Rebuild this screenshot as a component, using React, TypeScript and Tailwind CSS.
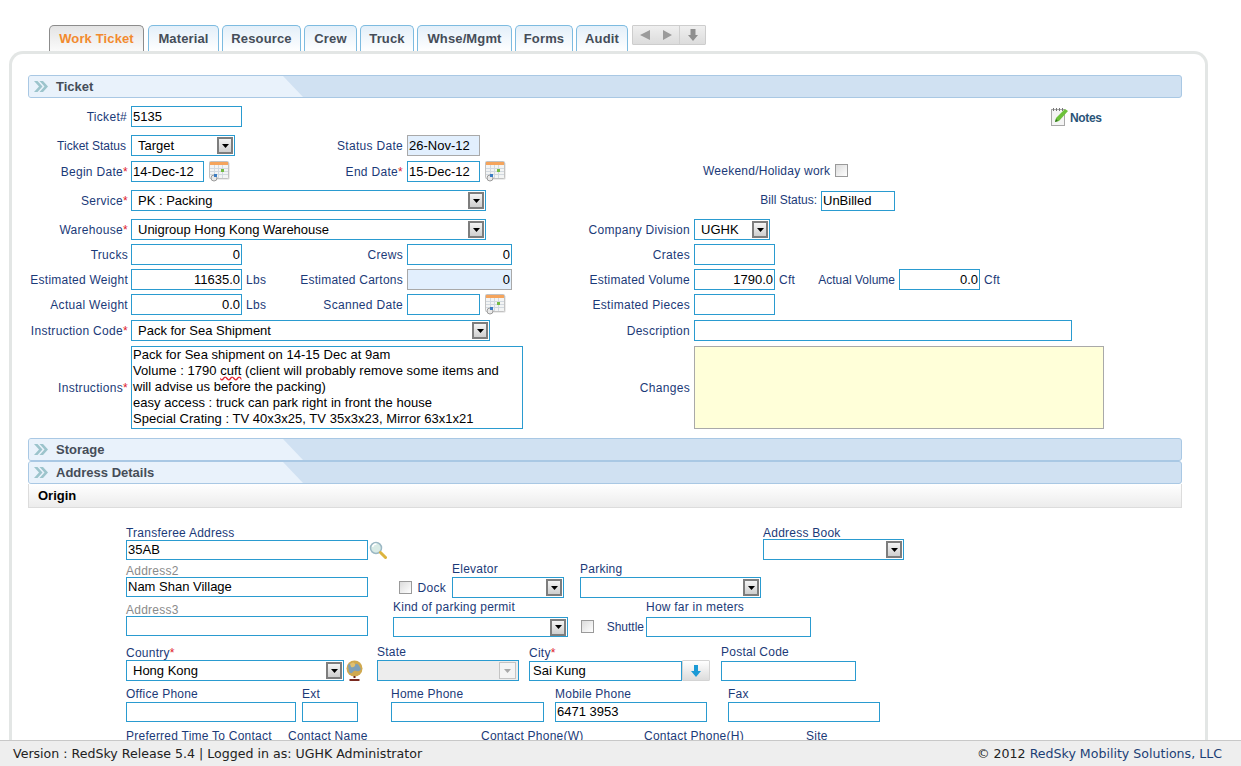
import type { ReactNode } from "react";

const rowGrid = "grid grid-cols-[103px_167px_109px_179px_108px_1fr] items-center";

const tabs = ["Material", "Resource", "Crew", "Truck", "Whse/Mgmt", "Forms", "Audit"];
const tabWidths: Record<string, string> = {
  Material: "w-[71px]",
  Resource: "w-[79px]",
  Crew: "w-[53px]",
  Truck: "w-[54px]",
  "Whse/Mgmt": "w-[95px]",
  Forms: "w-[58px]",
  Audit: "w-[52px]",
};

function Calendar() {
  return (
    <svg width="21" height="21" viewBox="0 0 21 21" className="shrink-0">
      <rect x="1.500" y="1.500" width="19" height="17" rx="1" fill="#d8d8d8" />
      <rect x="0.500" y="0.500" width="19" height="17" rx="1" fill="#f3f4f4" stroke="#c2c2c2" />
      <rect x="1" y="1" width="18" height="3" fill="#f5a45c" />
      <path d="M1 7.500h18M1 10.500h18M1 13.500h18M5.500 4v13M9.500 4v13M13.500 4v13" stroke="#d2d9e0" strokeWidth="1" />
      <rect x="12" y="8" width="3" height="3" fill="#74bb45" />
      <circle cx="5" cy="17" r="3" fill="#e8e8e8" stroke="#9a9a9a" />
      <rect x="5" y="13" width="3" height="3" fill="#3b7cc2" />
    </svg>
  );
}

function Arrow({ disabled }: { disabled?: boolean }) {
  return (
    <span
      className={
        disabled
          ? "flex h-[17px] w-[17px] items-center justify-center border border-[#c4c4c4] bg-[#f4f4f4]"
          : "flex h-[17px] w-[16px] items-center justify-center border-2 border-[#7d7d7d] bg-gradient-to-b from-[#f4f4f4] to-[#cfcfcf]"
      }
    >
      <svg width="7" height="4" viewBox="0 0 7 4">
        <path d="M0 0h7L3.500 4z" fill={disabled ? "#a8a8a8" : "#000"} />
      </svg>
    </span>
  );
}

function Box({
  value,
  right,
  className = "",
  h = "h-[21px]",
  tint,
}: {
  value?: string;
  right?: boolean;
  className?: string;
  h?: string;
  tint?: boolean;
}) {
  return (
    <div
      className={`flex items-center whitespace-nowrap border px-[1px] text-[13px] text-black ${h} ${
        tint ? "border-[#a9a9a9] bg-[#e2effd]" : "border-[#2a9bd0] bg-white"
      } ${right ? "justify-end" : ""} ${className}`}
    >
      {value}
    </div>
  );
}

function Select({
  value,
  className = "",
  h = "h-[21px]",
}: {
  value?: string;
  className?: string;
  h?: string;
}) {
  return (
    <div
      className={`flex items-center justify-between whitespace-nowrap border border-[#2a9bd0] bg-white pl-[6px] pr-[1px] text-[13px] text-black ${h} ${className}`}
    >
      <span className="pt-[1px]">{value}</span>
      <Arrow />
    </div>
  );
}

function Req() {
  return <span className="text-[#e0202c]">*</span>;
}

function Lbl({
  children,
  className = "",
  track = "tracking-[0.025em]",
}: {
  children: ReactNode;
  className?: string;
  track?: string;
}) {
  return (
    <div className={`whitespace-nowrap text-right text-[12px] text-[#1b3a78] ${track} ${className}`}>
      {children}
    </div>
  );
}

function Check({ className = "" }: { className?: string }) {
  return (
    <span
      className={`block h-[13px] w-[13px] shrink-0 border border-[#9a9a9a] bg-gradient-to-br from-[#dcdcdc] to-white ${className}`}
    />
  );
}

function SectionBar({ title, className = "" }: { title: string; className?: string }) {
  return (
    <div
      className={`relative flex h-[23px] items-center overflow-hidden rounded-[3px] border border-[#a9c8e4] bg-[#d0e1f2] ${className}`}
    >
      <span className="absolute inset-y-0 left-0 w-[275px] bg-[#e9f2fb] [clip-path:polygon(0_0,254px_0,274px_100%,0_100%)]" />
      <svg width="14" height="11" viewBox="0 0 14 11" className="relative ml-[5px]">
        <path d="M0 0l5 5.500-5 5.500h3.500l5-5.500-5-5.500zM5.500 0l5 5.500-5 5.500h3.500l5-5.500-5-5.500z" fill="#9cc4cc" />
      </svg>
      <span className="relative ml-[8px] text-[13px] font-bold text-[#454d58]">{title}</span>
    </div>
  );
}

// top-label field of the address block
function Field({
  label,
  className = "",
  labelClass = "",
  labelColor = "text-[#1b3a78]",
  children,
}: {
  label: ReactNode;
  className?: string;
  labelClass?: string;
  labelColor?: string;
  children?: ReactNode;
}) {
  return (
    <div className={`flex shrink-0 flex-col ${className}`}>
      <div className={`h-[14px] whitespace-nowrap text-[12px] leading-[14px] tracking-[0.02em] ${labelColor} ${labelClass}`}>
        {label}
      </div>
      {children}
    </div>
  );
}

export default function App() {
  return (
    <div className="flex h-[766px] w-[1241px] flex-col overflow-hidden bg-white font-['Liberation_Sans',Arial,sans-serif]">
      <div className="min-h-0 flex-1 overflow-hidden">
        <div className="ml-[49px] flex h-[51px] items-end gap-[3px]">
          <div className="mr-[1px] flex h-[26px] w-[95px] items-center justify-center rounded-t-[5px] border border-b-0 border-[#8c8c8c] bg-gradient-to-b from-[#e4e4e4] to-[#fafafa] text-[13px] font-bold tracking-[0.01em] text-[#f28a2e]">
            Work Ticket
          </div>
          {tabs.map((t) => (
            <div
              key={t}
              className={`flex h-[26px] items-center justify-center rounded-t-[5px] border border-b-0 border-[#7dbbe0] bg-gradient-to-b from-[#e3eff9] to-white text-[13px] font-bold tracking-[0.01em] text-[#454d58] ${tabWidths[t]}`}
            >
              {t}
            </div>
          ))}
          <div className="mb-[6px] ml-[1px] flex h-[20px] w-[74px] items-center rounded-[1px] border border-[#cdcdcd] bg-gradient-to-b from-[#efefef] to-[#dcdcdc]">
            <svg width="39" height="10" viewBox="0 0 39 10" className="ml-[7px]">
              <path d="M0 5l10-5v10zM23 0l9 5-9 5z" fill="#9b9b9b" />
            </svg>
            <span className="h-full border-l border-[#cfcfcf]" />
            <svg width="10" height="12" viewBox="0 0 10 12" className="ml-[8px]">
              <path d="M2.500 0h5v6h2.500l-5 6-5-6h2.500z" fill="#8f8f8f" />
            </svg>
          </div>
        </div>

        <div className="ml-[9px] h-[800px] w-[1199px] rounded-t-[14px] border-[3px] border-b-0 border-[#e3e6e5] pl-[16px] pr-[23px] pt-[21px]">
          <SectionBar title="Ticket" />

          <div className={`${rowGrid} mt-[8px] h-[21px]`}>
            <Lbl className="pr-[4px]">Ticket#</Lbl>
            <Box value="5135" className="w-[111px]" />
            <div className="col-start-6 ml-[357px] flex items-center">
              <svg width="19" height="19" viewBox="0 0 19 19">
                <rect x="0.500" y="2.500" width="13" height="16" fill="#f4f4f4" stroke="#a8a8a8" />
                <path d="M2.500 1v3M5.500 1v3M8.500 1v3M11.500 1v3" stroke="#777" />
                <path d="M4 15l1-4 9-9 3 2-9 10z" fill="#6cc13a" />
                <path d="M4 15l1-3 2 2z" fill="#2f6f20" />
              </svg>
              <span className="ml-[0px] mt-[3px] text-[12px] font-bold tracking-[-0.03em] text-[#2a5478]">Notes</span>
            </div>
          </div>

          <div className={`${rowGrid} mt-[8px] h-[21px]`}>
            <Lbl track="tracking-normal" className="pr-[5px]">Ticket Status</Lbl>
            <Select value="Target" className="w-[104px]" />
            <Lbl className="pr-[4px]">Status Date</Lbl>
            <Box value="26-Nov-12" tint className="w-[73px]" />
          </div>

          <div className={`${rowGrid} mt-[5px] h-[21px]`}>
            <Lbl className="pr-[3px]">
              Begin Date<Req />
            </Lbl>
            <div className="flex items-center gap-[5px]">
              <Box value="14-Dec-12" className="w-[73px]" />
              <Calendar />
            </div>
            <Lbl className="pr-[4px]">
              End Date<Req />
            </Lbl>
            <div className="flex items-center gap-[5px]">
              <Box value="15-Dec-12" className="w-[73px]" />
              <Calendar />
            </div>
            <div className="col-start-6 ml-[9px] flex items-center gap-[6px]">
              <Lbl track="tracking-[0.02em]" className="mb-[2px] w-[126px]">Weekend/Holiday work</Lbl>
              <Check className="mb-[2px]" />
            </div>
          </div>

          <div className={`${rowGrid} mt-[8px] h-[21px]`}>
            <Lbl className="pr-[3px]">
              Service<Req />
            </Lbl>
            <Select value="PK : Packing" className="col-span-3 w-[355px]" />
            <div className="col-start-6 flex items-center">
              <Lbl track="tracking-normal" className="mb-[1px] w-[123px]">Bill Status:</Lbl>
              <Box value="UnBilled" h="h-[20px]" className="ml-[4px] w-[74px]" />
            </div>
          </div>

          <div className={`${rowGrid} mt-[8px] h-[21px]`}>
            <Lbl className="pr-[3px]">
              Warehouse<Req />
            </Lbl>
            <Select value="Unigroup Hong Kong Warehouse" className="col-span-3 w-[355px]" />
            <Lbl className="col-start-5 pr-[4px]">Company Division</Lbl>
            <Select value="UGHK" className="w-[76px]" />
          </div>

          <div className={`${rowGrid} mt-[4px] h-[21px]`}>
            <Lbl className="pr-[3px]">Trucks</Lbl>
            <Box value="0" right className="w-[111px]" />
            <Lbl className="pr-[4px]">Crews</Lbl>
            <Box value="0" right className="w-[105px]" />
            <Lbl className="pr-[4px]">Crates</Lbl>
            <Box className="w-[81px]" />
          </div>

          <div className={`${rowGrid} mt-[4px] h-[21px]`}>
            <Lbl track="tracking-[0.02em]" className="pr-[3px]">Estimated Weight</Lbl>
            <div className="flex items-center">
              <Box value="11635.0" right className="w-[111px]" />
              <Lbl className="ml-[4px]">Lbs</Lbl>
            </div>
            <Lbl track="tracking-[0.02em]" className="pr-[4px]">Estimated Cartons</Lbl>
            <Box value="0" right tint className="w-[105px]" />
            <Lbl track="tracking-[0.02em]" className="pr-[4px]">Estimated Volume</Lbl>
            <div className="flex items-center">
              <Box value="1790.0" right className="w-[81px]" />
              <Lbl className="ml-[4px] w-[16px]">Cft</Lbl>
              <Lbl track="tracking-normal" className="w-[100px]">Actual Volume</Lbl>
              <Box value="0.0" right className="ml-[4px] w-[81px]" />
              <Lbl className="ml-[4px]">Cft</Lbl>
            </div>
          </div>

          <div className={`${rowGrid} mt-[4px] h-[21px]`}>
            <Lbl className="pr-[3px]">Actual Weight</Lbl>
            <div className="flex items-center">
              <Box value="0.0" right className="w-[111px]" />
              <Lbl className="ml-[4px]">Lbs</Lbl>
            </div>
            <Lbl className="pr-[4px]">Scanned Date</Lbl>
            <div className="flex items-center gap-[5px]">
              <Box className="w-[73px]" />
              <Calendar />
            </div>
            <Lbl className="pr-[4px]">Estimated Pieces</Lbl>
            <Box className="w-[81px]" />
          </div>

          <div className={`${rowGrid} mt-[5px] h-[21px]`}>
            <Lbl className="pr-[3px]">
              Instruction Code<Req />
            </Lbl>
            <Select value="Pack for Sea Shipment" className="col-span-3 w-[359px]" />
            <Lbl className="col-start-5 pr-[4px]">Description</Lbl>
            <Box className="w-[378px]" />
          </div>

          <div className={`${rowGrid} mt-[5px] h-[83px]`}>
            <Lbl className="pr-[3px]">
              Instructions<Req />
            </Lbl>
            <div className="col-span-3 h-[83px] w-[392px] whitespace-nowrap border border-[#2a9bd0] px-[1px] text-[13px] leading-[16px] tracking-[0.003em] text-black">
              Pack for Sea shipment on 14-15 Dec at 9am
              <br />
              Volume : 1790 <span className="underline decoration-[#e0202c] decoration-wavy">cuft</span> (client will probably remove some items and
              <br />
              will advise us before the packing)
              <br />
              easy access : truck can park right in front the house
              <br />
              Special Crating : TV 40x3x25, TV 35x3x23, Mirror 63x1x21
            </div>
            <Lbl className="col-start-5 pr-[4px]">Changes</Lbl>
            <div className="h-[83px] w-[410px] border border-[#a9a9a9] bg-[#ffffd9]" />
          </div>

          <SectionBar title="Storage" className="mt-[9px]" />
          <SectionBar title="Address Details" />
          <div className="flex h-[24px] items-center border border-t-0 border-[#dcdcdc] bg-gradient-to-b from-white to-[#ececec] pl-[9px] text-[13px] font-bold text-black">
            Origin
          </div>

          <div className="pl-[98px]">
            <div className="mt-[18px] flex items-end">
              <Field label="Transferee Address" className="w-[242px]">
                <Box value="35AB" h="h-[20px]" />
              </Field>
              <svg width="18" height="19" viewBox="0 0 18 19" className="ml-[1px]">
                <circle cx="7" cy="7" r="5.500" fill="#d9ebe6" stroke="#9bb8c4" strokeWidth="1.500" />
                <path d="M3.500 6a4 4 0 0 1 4-3" stroke="#fff" strokeWidth="1.500" fill="none" />
                <path d="M11.500 11.500l5 5" stroke="#dcb43e" strokeWidth="3" strokeLinecap="round" />
              </svg>
              <Field label="Address Book" labelClass="mb-[-1px]" className="ml-[376px] w-[141px]">
                <Select />
              </Field>
            </div>

            <div className="mt-[2px] flex items-end">
              <Field
                label="Address2"
                labelColor="text-[#8a8a8a]"
                labelClass="mb-[-1px]"
                className="mb-[1px] w-[242px]"
              >
                <Box value="Nam Shan Village" h="h-[20px]" />
              </Field>
              <Check className="mb-[4px] ml-[31px]" />
              <Lbl className="mb-[1px] ml-[5px] mr-[6px] w-[29px]">Dock</Lbl>
              <Field label="Elevator" labelClass="mb-[1px]" className="w-[112px]">
                <Select />
              </Field>
              <Field label="Parking" labelClass="mb-[1px]" className="ml-[16px] w-[181px]">
                <Select />
              </Field>
            </div>

            <div className="mt-[2px] flex items-end">
              <Field label="Address3" labelColor="text-[#8a8a8a]" labelClass="mb-[-1px]" className="mb-[1px] w-[242px]">
                <Box h="h-[20px]" />
              </Field>
              <Field label="Kind of parking permit" labelClass="mb-[3px]" className="ml-[25px] w-[175px]">
                <Select h="h-[20px]" />
              </Field>
              <Check className="mb-[4px] ml-[13px]" />
              <Lbl track="tracking-normal" className="mb-[1px] ml-[12px] mr-[2px] w-[38px]">Shuttle</Lbl>
              <Field label="How far in meters" labelClass="mb-[3px]" className="w-[165px]">
                <Box h="h-[20px]" />
              </Field>
            </div>

            <div className="mt-[8px] flex items-end">
              <Field
                label={
                  <>
                    Country
                    <Req />
                  </>
                }
                className="w-[218px]"
                labelClass="mt-[1px]"
              >
                <Select value="Hong Kong" />
              </Field>
              <svg width="17" height="21" viewBox="0 0 17 21" className="ml-[2px]">
                <circle cx="8.500" cy="8.500" r="8" fill="#d0a94f" />
                <path d="M2 5c3-3 6 0 8-1s3 2 5 5c-2 4-5 1-7 2s-2 4-5 1z" fill="#7d9fb8" />
                <path d="M4 4c2-2 4-2 5 0s-2 4-4 3z" fill="#e0c070" />
                <path d="M8.500 16v2" stroke="#6e2a20" strokeWidth="2" />
                <path d="M3.500 20h10" stroke="#7a2a20" strokeWidth="2" />
              </svg>
              <Field label="State" labelClass="mb-[1px]" className="ml-[14px] w-[142px]">
                <div className="flex h-[21px] items-center justify-end border border-[#2a9bd0] bg-[#ededed] pr-[2px]">
                  <Arrow disabled />
                </div>
              </Field>
              <Field
                label={
                  <>
                    City
                    <Req />
                  </>
                }
                className="ml-[10px] w-[181px]"
              >
                <div className="flex items-end">
                  <Box value="Sai Kung" h="h-[20px]" className="mt-[1px] w-[153px] pl-[3px]" />
                  <div className="flex h-[21px] w-[28px] items-center justify-center rounded-[1px] border border-[#d4d4d4] bg-gradient-to-b from-white to-[#dcdcdc]">
                    <svg width="10" height="12" viewBox="0 0 10 12">
                      <path d="M3 0h4v6h3l-5 6-5-6h3z" fill="#1b9ad6" />
                    </svg>
                  </div>
                </div>
              </Field>
              <Field label="Postal Code" labelClass="mb-[2px]" className="ml-[11px] w-[135px]">
                <Box h="h-[20px]" />
              </Field>
            </div>

            <div className="mt-[6px] flex items-end">
              <Field label="Office Phone" labelClass="mb-[1px]" className="w-[170px]">
                <Box h="h-[20px]" />
              </Field>
              <Field label="Ext" labelClass="mb-[1px]" className="ml-[6px] w-[56px]">
                <Box h="h-[20px]" />
              </Field>
              <Field label="Home Phone" labelClass="mb-[1px]" className="ml-[33px] w-[153px]">
                <Box h="h-[20px]" />
              </Field>
              <Field label="Mobile Phone" labelClass="mb-[1px]" className="ml-[11px] w-[152px]">
                <Box value="6471 3953" h="h-[20px]" />
              </Field>
              <Field label="Fax" labelClass="mb-[1px]" className="ml-[21px] w-[152px]">
                <Box h="h-[20px]" />
              </Field>
            </div>

            <div className="mt-[7px] flex">
              <Field label="Preferred Time To Contact" className="w-[162px]" />
              <Field label="Contact Name" className="w-[193px]" />
              <Field label="Contact Phone(W)" className="w-[163px]" />
              <Field label="Contact Phone(H)" className="w-[162px]" />
              <Field label="Site" />
            </div>
          </div>
        </div>
      </div>

      <div className="flex h-[26px] shrink-0 items-center justify-between border-t border-[#c8c8c8] bg-[#eeeeee] pl-[13px] pr-[19px] pt-[2px] font-['DejaVu_Sans',sans-serif] text-[12.6px] text-[#222]">
        <span>Version : RedSky Release 5.4 | Logged in as: UGHK Administrator</span>
        <span>
          © 2012 <span className="text-[#1c3f75]">RedSky Mobility Solutions, LLC</span>
        </span>
      </div>
    </div>
  );
}
